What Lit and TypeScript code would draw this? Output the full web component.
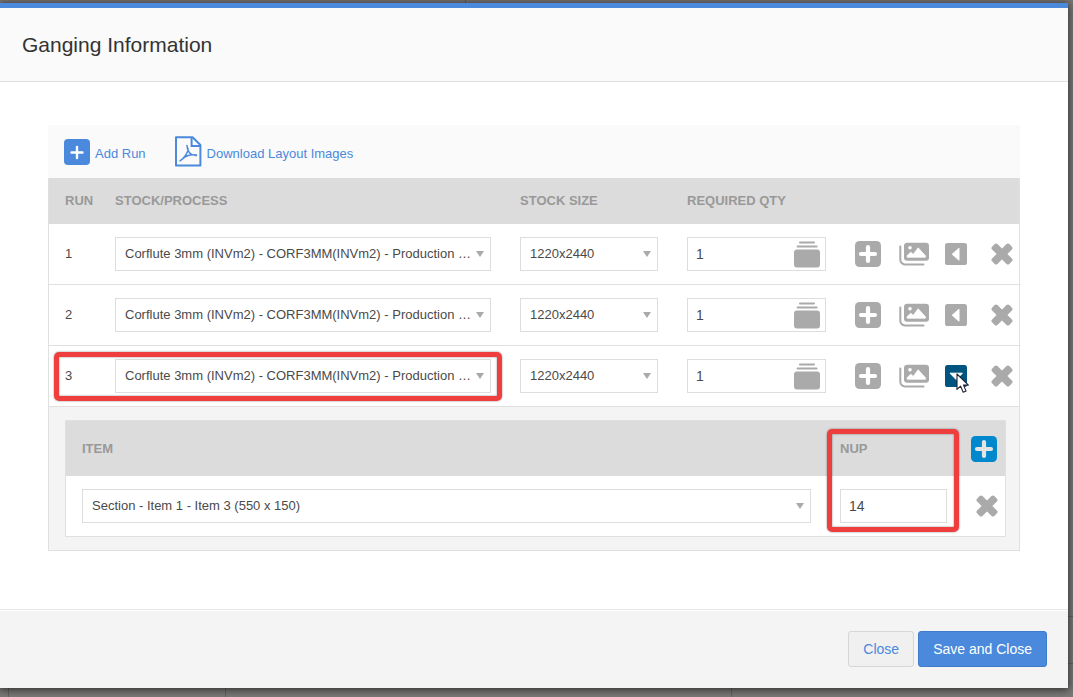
import { LitElement, html, css, svg, nothing } from "lit";
import { customElement, state } from "lit/decorators.js";
import { classMap } from "lit/directives/class-map.js";

interface Item {
  name: string;
  nup: number;
}

interface Run {
  id: number;
  stock: string;
  size: string;
  qty: number;
  open: boolean;
  items: Item[];
}

const STOCK = "Corflute 3mm (INVm2) - CORF3MM(INVm2) - Production …";

const plusIcon = (inner: string) => html`
  <svg width="26" height="26" viewBox="0 0 26 26" aria-hidden="true">
    <rect width="26" height="26" rx="4.5" fill="currentColor" />
    ${svg`<path d="M13 6v14M6 13h14" stroke=${inner} stroke-width="4.2" stroke-linecap="round" />`}
  </svg>`;

const addRunIcon = html`
  <svg width="26" height="26" viewBox="0 0 26 26" aria-hidden="true">
    <rect width="26" height="26" rx="4" fill="currentColor" />
    <path d="M13 8v11M7.5 13.5h11" stroke="#fff" stroke-width="2.4" stroke-linecap="round" />
  </svg>`;

const pdfIcon = html`
  <svg width="27" height="31" viewBox="0 0 27 31" fill="none" stroke="currentColor" aria-hidden="true">
    <path d="M1 1.2h16.6L25.4 9v20.4H1z" stroke-width="2" stroke-linejoin="round" />
    <path d="M16.6 1.5v8.4h8.6" stroke-width="2" />
    <path d="M12 9.6c.2 3.2.8 5.4 2.4 7.2 1.7 1.9 4 2.9 7 2.6M13 12.4c.4 3.4-3 9.4-8 12.4M8 22.4c3.4-3 8.4-4.4 13.4-3.4" stroke-width="1.5" stroke-linecap="round" />
  </svg>`;

const stackIcon = html`
  <svg width="26" height="27" viewBox="0 0 26 27" fill="currentColor" aria-hidden="true">
    <rect x="5" y="0.6" width="16" height="1.8" rx="0.9" />
    <rect x="2.6" y="4.4" width="21" height="2" rx="1" />
    <rect x="0" y="8.4" width="26" height="18" rx="3" />
  </svg>`;

const imagesIcon = html`
  <svg width="30" height="24" viewBox="0 0 30 24" aria-hidden="true">
    <path d="M1.3 4.6v13.2a4.6 4.6 0 0 0 4.6 4.6h18.6" fill="none" stroke="currentColor" stroke-width="2" stroke-linecap="round" />
    <rect x="5" y="0.8" width="25" height="18" rx="3.2" fill="currentColor" />
    <circle cx="11" cy="5.8" r="1.8" fill="#fff" />
    <path d="M8.2 15.2v-1.6l3.6-3.4 2.4 2.2 5-6.6 7.2 8v1.4z" fill="#fff" stroke="#fff" stroke-width="0.8" stroke-linejoin="round" />
  </svg>`;

const caretIcon = (open: boolean) => html`
  <svg width="22" height="22" viewBox="0 0 22 22" aria-hidden="true">
    <rect width="22" height="22" rx="2.6" fill="currentColor" />
    ${open
      ? svg`<path d="M5 8.2h12.4l-6.2 6.4z" fill="#fff" stroke="#fff" stroke-linejoin="round" />`
      : svg`<path d="M14 5.2v12L7.2 11.2z" fill="#fff" stroke="#fff" stroke-linejoin="round" />`}
  </svg>`;

const crossIcon = html`
  <svg width="22" height="22" viewBox="0 0 22 22" fill="currentColor" aria-hidden="true">
    <rect x="-1.2" y="7.2" width="24.4" height="7.6" rx="2" transform="rotate(45 11 11)" />
    <rect x="-1.2" y="7.2" width="24.4" height="7.6" rx="2" transform="rotate(-45 11 11)" />
  </svg>`;

const pointerIcon = html`
  <svg width="14" height="21" viewBox="0 0 14 21" aria-hidden="true">
    <path d="M1 1v15.4l3.6-3.3 2.6 6.2 2.9-1.2-2.6-6h4.9z" fill="#fff" stroke="#223" stroke-width="1.1" stroke-linejoin="round" />
  </svg>`;

@customElement("app-root")
export class AppRoot extends LitElement {
  static styles = css`
    :host {
      display: block;
      box-sizing: border-box;
      min-height: 100vh;
      padding: 3px 5px 9px 0;
      overflow: hidden;
      background:
        linear-gradient(#636261, #636261) 8px 100% / 1px 9px no-repeat,
        linear-gradient(#636261, #636261) 225px 100% / 1px 9px no-repeat,
        linear-gradient(#636261, #636261) 731px 100% / 1px 9px no-repeat,
        linear-gradient(#636261, #636261) 465px 0 / 1px 3px no-repeat,
        linear-gradient(#636261, #636261) 100% 616px / 5px 1px no-repeat,
        linear-gradient(#636261, #636261) 100% 663px / 5px 1px no-repeat,
        #7b7977;
      color: #4a4a4a;
      font: 13px/18px "Liberation Sans", Arial, sans-serif;
    }
    * {
      box-sizing: border-box;
    }
    .dialog {
      display: flex;
      flex-direction: column;
      min-height: calc(100vh - 12px);
      background: #fff;
      border-top: 5px solid #4a89dc;
      box-shadow: 0 1px 8px 1px rgba(0, 0, 0, 0.6);
    }
    .head {
      padding: 22px 22px 21px;
      background: #fafafa;
      border-bottom: 1px solid #e0e0e0;
    }
    .title {
      margin: 0;
      color: #333;
      font-size: 21px;
      font-weight: 400;
      line-height: 30px;
    }
    .body {
      flex: 1;
      padding: 43px 48px;
    }
    .foot {
      display: flex;
      justify-content: flex-end;
      gap: 4px;
      padding: 21px;
      background: #f4f4f4;
      border-top: 1px solid #e8e8e8;
      box-shadow: inset 0 1px #fff;
    }
    button {
      display: block;
      margin: 0;
      padding: 0;
      border: 0;
      background: none;
      color: inherit;
      font: inherit;
      cursor: pointer;
    }
    svg {
      display: block;
    }
    .btn {
      height: 36px;
      padding: 0 14px;
      border: 1px solid #d6d6d6;
      border-radius: 3px;
      background: #f0f0f0;
      color: #4a89dc;
      font-size: 14px;
    }
    .btn.primary {
      border-color: #3f7bcb;
      background: #4a89dc;
      color: #fff;
    }
    .tools {
      display: flex;
      gap: 29px;
      height: 53px;
      padding: 0 16px;
      background: #fafafa;
    }
    .tool {
      display: flex;
      align-items: center;
      gap: 5px;
      color: #4a89dc;
    }
    .tool span {
      padding-top: 5px;
    }
    table {
      width: 100%;
      border: 1px solid #e0e0e0;
      border-collapse: separate;
      border-spacing: 0;
      table-layout: fixed;
    }
    th {
      padding: 0;
      background: #dcdcdc;
      color: #999;
      font-weight: 700;
      text-align: left;
    }
    td {
      padding: 13px 0;
      background: #fff;
    }
    .runs {
      border-top-width: 0;
    }
    .runs > thead th {
      height: 46px;
    }
    .run {
      position: relative;
    }
    .run > td {
      border-bottom: 1px solid #e0e0e0;
    }
    .run:last-child > td {
      border-bottom: 0;
    }
    .first {
      padding-left: 16px;
    }
    .c-run {
      width: 66px;
    }
    .c-size {
      width: 167px;
    }
    .c-qty {
      width: 168px;
    }
    .c-actions {
      width: 164px;
    }
    .field {
      position: relative;
      margin-right: 29px;
    }
    select,
    input {
      display: block;
      width: 100%;
      height: 34px;
      margin: 0;
      padding: 0 9px;
      border: 1px solid #ddd;
      border-radius: 0;
      background: #fff;
      color: #4a4a4a;
      font: inherit;
      appearance: none;
    }
    input {
      padding: 0 8px;
      font-size: 14px;
    }
    .pick::after {
      content: "";
      position: absolute;
      top: 14px;
      right: 7px;
      border: 4px solid transparent;
      border-top: 6px solid #aaa;
      border-bottom: 0;
      pointer-events: none;
    }
    .stack {
      position: absolute;
      top: 4px;
      right: 6px;
      color: #aaa;
    }
    .actions {
      display: grid;
      grid-template-columns: 44px 46px 46px 22px;
      align-items: center;
      color: #aaa;
    }
    .actions button {
      position: relative;
      justify-self: start;
    }
    .toggle.open {
      color: #005580;
    }
    .pointer {
      position: absolute;
      top: 8px;
      left: 11px;
      pointer-events: none;
    }
    .detail > td {
      padding: 13px 13px 13px 16px;
      background: #f4f4f4;
    }
    .nested {
      position: relative;
    }
    .items th {
      height: 55px;
    }
    .c-nup {
      width: 131px;
    }
    .c-item-actions {
      width: 34px;
    }
    .nup {
      margin-right: 24px;
    }
    .add-item {
      color: #0088cc;
    }
    .remove-item {
      margin-left: 5px;
      color: #aaa;
    }
    .mark {
      position: absolute;
      border: 5px solid #ef3e3e;
      border-radius: 5px;
      box-shadow: 0 0 2px rgba(0, 0, 0, 0.5), inset 0 0 2px rgba(0, 0, 0, 0.5);
      pointer-events: none;
    }
    .mark-run {
      top: 6px;
      bottom: 6px;
      left: 5px;
      right: 517px;
    }
    .mark-nup {
      top: 9px;
      bottom: 5px;
      right: 47px;
      width: 132px;
    }
  `;

  @state()
  private runs: Run[] = [
    { id: 1, stock: STOCK, size: "1220x2440", qty: 1, open: false, items: [] },
    { id: 2, stock: STOCK, size: "1220x2440", qty: 1, open: false, items: [] },
    {
      id: 3,
      stock: STOCK,
      size: "1220x2440",
      qty: 1,
      open: true,
      items: [{ name: "Section - Item 1 - Item 3 (550 x 150)", nup: 14 }],
    },
  ];

  private toggle(id: number) {
    this.runs = this.runs.map((r) => (r.id === id ? { ...r, open: !r.open } : r));
  }

  private renderRun(run: Run) {
    return html`
      <tr class="run">
        <td class="first">
          ${run.id}
          ${run.open ? html`<div class="mark mark-run"></div>` : nothing}
        </td>
        <td>
          <div class="field pick">
            <select aria-label="Stock/Process, run ${run.id}"><option>${run.stock}</option></select>
          </div>
        </td>
        <td>
          <div class="field pick">
            <select aria-label="Stock size, run ${run.id}"><option>${run.size}</option></select>
          </div>
        </td>
        <td>
          <div class="field">
            <input type="text" aria-label="Required qty, run ${run.id}" .value=${String(run.qty)} />
            <button class="stack" aria-label="Fill quantity">${stackIcon}</button>
          </div>
        </td>
        <td>
          <div class="actions">
            <button aria-label="Add item">${plusIcon("#fff")}</button>
            <button aria-label="Layout images">${imagesIcon}</button>
            <button
              class=${classMap({ toggle: true, open: run.open })}
              aria-label="Toggle items"
              aria-expanded=${run.open ? "true" : "false"}
              @click=${() => this.toggle(run.id)}
            >
              ${caretIcon(run.open)}
              ${run.open ? html`<span class="pointer">${pointerIcon}</span>` : nothing}
            </button>
            <button aria-label="Remove run">${crossIcon}</button>
          </div>
        </td>
      </tr>
      ${run.open ? this.renderItems(run) : nothing}
    `;
  }

  private renderItems(run: Run) {
    return html`
      <tr class="detail">
        <td colspan="5">
          <div class="nested">
            <table class="items">
              <colgroup>
                <col />
                <col class="c-nup" />
                <col class="c-item-actions" />
              </colgroup>
              <thead>
                <tr>
                  <th class="first">ITEM</th>
                  <th>NUP</th>
                  <th><button class="add-item" aria-label="Add item">${plusIcon("#e4e4e4")}</button></th>
                </tr>
              </thead>
              <tbody>
                ${run.items.map(
                  (item) => html`
                    <tr>
                      <td class="first">
                        <div class="field pick">
                          <select aria-label="Item"><option>${item.name}</option></select>
                        </div>
                      </td>
                      <td>
                        <div class="nup"><input type="text" aria-label="Nup" .value=${String(item.nup)} /></div>
                      </td>
                      <td><button class="remove-item" aria-label="Remove item">${crossIcon}</button></td>
                    </tr>
                  `
                )}
              </tbody>
            </table>
            <div class="mark mark-nup"></div>
          </div>
        </td>
      </tr>
    `;
  }

  render() {
    return html`
      <section class="dialog" role="dialog" aria-labelledby="title">
        <header class="head"><h1 class="title" id="title">Ganging Information</h1></header>
        <main class="body">
          <div class="tools">
            <button class="tool">${addRunIcon}<span>Add Run</span></button>
            <button class="tool">${pdfIcon}<span>Download Layout Images</span></button>
          </div>
          <table class="runs">
            <colgroup>
              <col class="c-run" />
              <col />
              <col class="c-size" />
              <col class="c-qty" />
              <col class="c-actions" />
            </colgroup>
            <thead>
              <tr>
                <th class="first">RUN</th>
                <th>STOCK/PROCESS</th>
                <th>STOCK SIZE</th>
                <th>REQUIRED QTY</th>
                <th aria-label="Actions"></th>
              </tr>
            </thead>
            <tbody>
              ${this.runs.map((run) => this.renderRun(run))}
            </tbody>
          </table>
        </main>
        <footer class="foot">
          <button class="btn">Close</button>
          <button class="btn primary">Save and Close</button>
        </footer>
      </section>
    `;
  }
}
